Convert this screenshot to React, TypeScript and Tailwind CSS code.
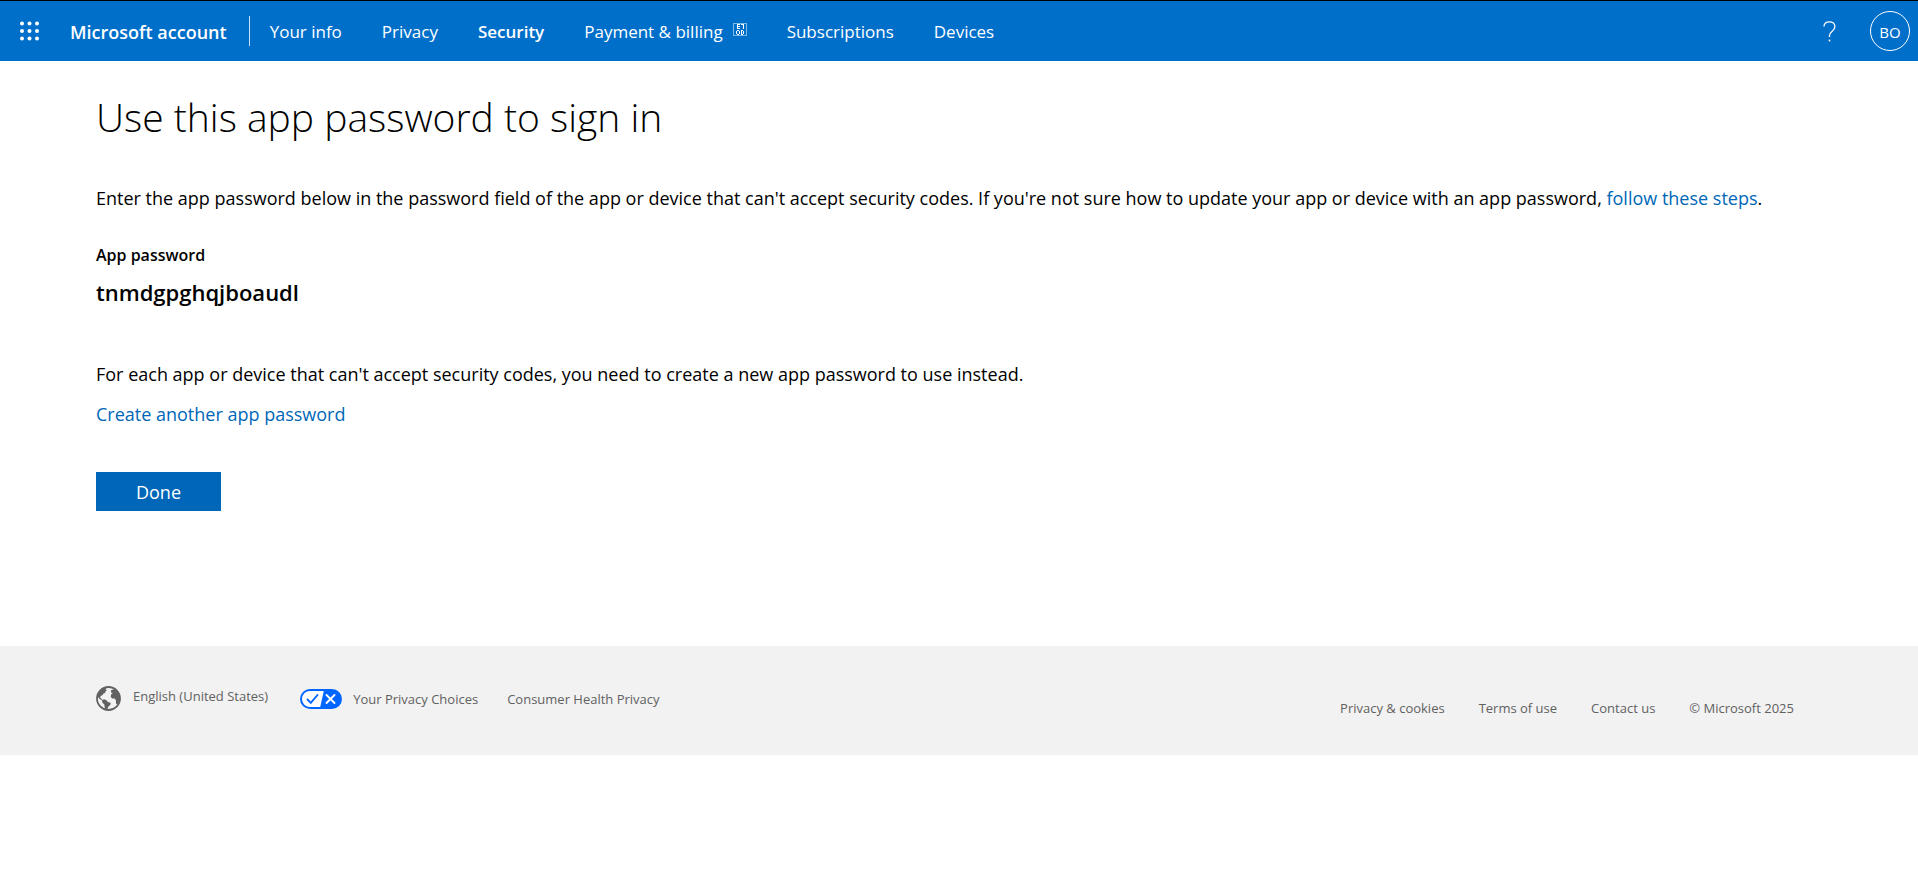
import React from "react";

function WaffleIcon() {
  const stops = [2, 9.5, 17];
  return (
    <svg width="20" height="20" viewBox="0 0 20 20" fill="currentColor" aria-hidden="true">
      {stops.map((y) => stops.map((x) => <circle key={`${x}-${y}`} cx={x} cy={y + 0.5} r="2" />))}
    </svg>
  );
}

function GlyphBoxIcon() {
  return (
    <svg width="14" height="13" viewBox="0 0 14 13" fill="none" shapeRendering="crispEdges" aria-hidden="true">
      <rect x="0.5" y="0.5" width="13" height="12" stroke="#7fbbe9" />
      <path
        d="M4 1.5h3M4 3.5h3M4 5.5h3M4.5 1v5M8 1.5h3M10.5 1v5M4 7.5h2M4 11.5h2M3.5 8v3M6.5 8v3M8 7.5h2M8 11.5h2M8.5 7v5M10.5 8v3"
        stroke="#fff"
      />
    </svg>
  );
}

function HelpIcon() {
  return (
    <svg width="13" height="21" viewBox="0 0 13 21" fill="none" stroke="currentColor" strokeWidth="1.3" aria-hidden="true">
      <path d="M1 5.6C1 2.6 3.2.8 6.4.8s5.5 1.9 5.5 4.7c0 2.1-1 3.3-2.7 4.7C7.4 11.7 6.5 12.7 6.5 14.6V16" />
      <path d="M6.5 18.6v1.8" strokeWidth="1.6" />
    </svg>
  );
}

function GlobeIcon() {
  return (
    <svg width="25" height="25" viewBox="0 0 25 25" aria-hidden="true">
      <circle cx="12.5" cy="12.5" r="11.5" fill="none" stroke="#616161" strokeWidth="1.8" />
      <g fill="#616161">
        <path d="M2 8.2 4.6 4.5 8 2.2l2.6-.7-.8 1.9 1 1.2-1.6.8.2 1.3-2.2 1-.8 1.6-1.9.8-.3 1.5 1.6 1.6 1 .8-.7.5-2-1.3-1.5-1.5L1.5 11z" />
        <path d="m6 14.2 2.2-.9 2.5 1.2 1.1 1.4 2.9.9-.3 2-1.9 1.6-.9 2-2 1.6-.9-2.7-.4-2.9-2-1.9z" />
        <path d="m15 4.6 1.8-1.2 2-.2 2.6 2.6 1.9 3.4.6 3.3-.7 3.2-1.8 3-1.4-1.1-.1-3.4-1.2-1.7-2.6.1-1.4-1.9.5-2.5 1.7-1.2-1.9-.6z" />
      </g>
    </svg>
  );
}

function PrivacyChoicesIcon() {
  return (
    <svg width="42" height="20" viewBox="0 0 42 20" fill="none" aria-hidden="true">
      <rect x="1" y="1" width="40" height="18" rx="9" fill="#fff" stroke="#06f" strokeWidth="2" />
      <path d="M24 1h8a9 9 0 0 1 0 18H20z" fill="#06f" />
      <path d="m7.5 10.5 3.3 3.3L17.5 6" stroke="#06f" strokeWidth="1.9" strokeLinecap="round" />
      <path d="m26.5 6 8 8m0-8-8 8" stroke="#fff" strokeWidth="1.9" strokeLinecap="round" />
    </svg>
  );
}

export default function App() {
  return (
    <div className="min-h-screen bg-white font-['Open_Sans','Noto_Sans',sans-serif] text-black">
      <header className="flex h-[61px] items-center border-t border-black bg-[#006fca] pl-5 pr-2 text-white">
        <button type="button" aria-label="App launcher">
          <WaffleIcon />
        </button>
        <a href="#home" className="ml-[30px] pt-0.5 text-lg font-semibold leading-6">
          Microsoft account
        </a>
        <div className="ml-[22px] h-[30px] w-px bg-white/80" />
        <nav className="ml-5 flex items-center gap-10 whitespace-nowrap pt-0.5 text-[17px] leading-6">
          <a href="#info">Your info</a>
          <a href="#privacy">Privacy</a>
          <a href="#security" className="font-semibold">Security</a>
          <a href="#billing" className="flex items-start gap-2.5">
            Payment &amp; billing
            <span className="pt-[3px]">
              <GlyphBoxIcon />
            </span>
          </a>
          <a href="#subscriptions">Subscriptions</a>
          <a href="#devices">Devices</a>
        </nav>
        <button type="button" aria-label="Help" className="ml-auto">
          <HelpIcon />
        </button>
        <button type="button" className="ml-[34px] size-10 rounded-full border border-white pt-0.5 text-[15px]">
          BO
        </button>
      </header>

      <main className="px-24 pb-[135px] pt-[26px]">
        <h1 className="text-[39px] font-light leading-[60px]">Use this app password to sign in</h1>
        <p className="mt-[37px] text-lg leading-7">
          Enter the app password below in the password field of the app or device that can't accept security codes. If
          you're not sure how to update your app or device with an app password,{" "}
          <a href="#steps" className="text-[#0067b8]">follow these steps</a>.
        </p>
        <h2 className="mt-[29px] text-base font-semibold leading-7">App password</h2>
        <p className="mt-[7px] text-[22px] font-semibold leading-8">tnmdgpghqjboaudl</p>
        <p className="mt-[52px] text-lg leading-7">
          For each app or device that can't accept security codes, you need to create a new app password to use instead.
        </p>
        <a href="#create" className="mt-3 block w-fit text-lg leading-7 text-[#0067b8]">
          Create another app password
        </a>
        <button type="button" className="mt-11 h-[39px] w-[125px] bg-[#0067b8] text-lg text-white">
          Done
        </button>
      </main>

      <footer className="flex h-[109px] justify-between bg-[#f2f2f2] pl-24 pr-[124px] text-[13px] leading-5 text-[#616161]">
        <div className="flex items-start pt-10">
          <a href="#language" className="flex gap-3">
            <GlobeIcon />
            English (United States)
          </a>
          <a href="#choices" className="ml-8 flex gap-[11px] pt-[3px]">
            <PrivacyChoicesIcon />
            Your Privacy Choices
          </a>
          <a href="#health" className="ml-[29px] pt-[3px]">Consumer Health Privacy</a>
        </div>
        <div className="flex gap-[34px] pt-[52px]">
          <a href="#cookies">Privacy &amp; cookies</a>
          <a href="#terms">Terms of use</a>
          <a href="#contact">Contact us</a>
          <span>© Microsoft 2025</span>
        </div>
      </footer>
    </div>
  );
}
